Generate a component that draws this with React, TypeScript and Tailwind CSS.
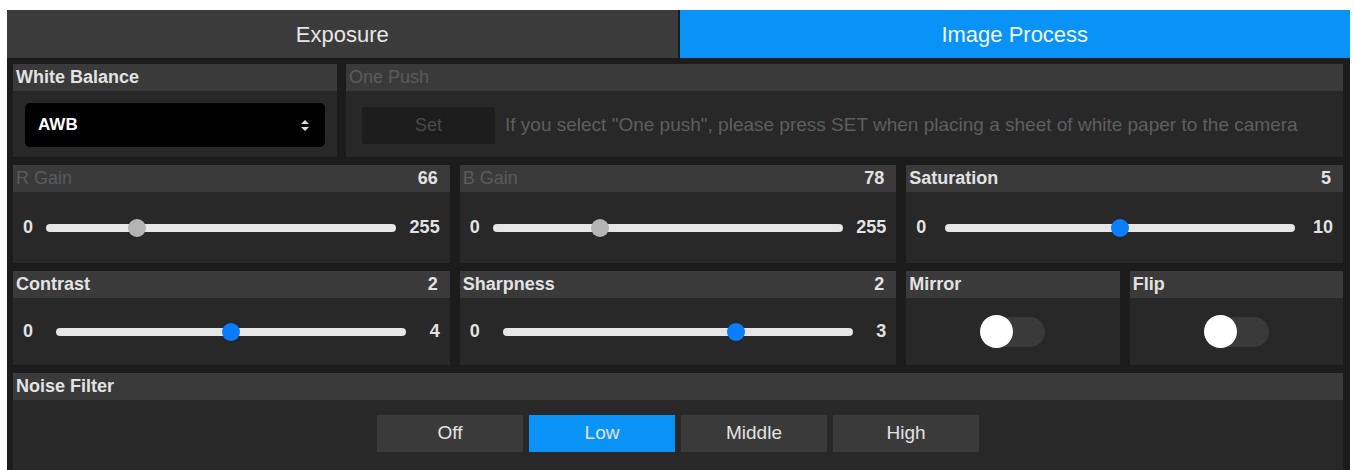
import React from 'react';

interface CardProps {
  title: string;
  value?: number;
  dim?: boolean;
  className?: string;
  children?: React.ReactNode;
}

function Card({ title, value, dim, className = '', children }: CardProps) {
  return (
    <div className={`flex flex-col bg-[#282828] ${className}`}>
      <div className="flex h-[27px] shrink-0 items-center justify-between bg-[#3a3a3a] pl-[3px] pr-[12px] text-[18px]">
        <span className={dim ? 'text-[#5a5a5a]' : 'font-bold text-[#e2e2e2]'}>{title}</span>
        {value !== undefined && <span className="font-bold text-[#e2e2e2]">{value}</span>}
      </div>
      <div className="flex-1">{children}</div>
    </div>
  );
}

interface SliderProps {
  min: number;
  max: number;
  value: number;
  disabled?: boolean;
}

function Slider({ min, max, value, disabled }: SliderProps) {
  const pct = ((value - min) / (max - min)) * 100;
  return (
    <div className="flex h-full items-center justify-between px-[10px] text-[18px] font-bold text-[#e2e2e2]">
      <span>{min}</span>
      <div className="relative h-[8px] w-[350px] rounded-full bg-[#e6e6e6]">
        <span
          className={`absolute top-1/2 h-[18px] w-[18px] -translate-x-1/2 -translate-y-1/2 rounded-full ${
            disabled ? 'bg-[#b4b4b4]' : 'bg-[#0a7cff]'
          }`}
          style={{ left: `${pct}%` }}
        />
      </div>
      <span>{max}</span>
    </div>
  );
}

function Toggle() {
  return (
    <div className="flex h-full items-center justify-center">
      <div className="flex h-[30px] w-[65px] items-center rounded-full bg-[#3a3a3a]">
        <span className="h-[33px] w-[33px] shrink-0 rounded-full bg-white" />
      </div>
    </div>
  );
}

function UpDownIcon() {
  return (
    <svg width="8" height="11" viewBox="0 0 8 11" fill="#dcdcdc">
      <path d="M4 0 L8 4 H0 Z" />
      <path d="M0 7 H8 L4 11 Z" />
    </svg>
  );
}

export default function App() {
  const filters = ['Off', 'Low', 'Middle', 'High'];

  return (
    <div className="h-[470px] overflow-hidden bg-white pl-[7px] pr-[3px] pt-[10px] font-[Liberation_Sans,Arial,sans-serif]">
      <div className="flex h-full flex-col bg-[#1c1c1c]">
        {/* tabs */}
        <div className="grid h-[48px] shrink-0 grid-cols-2 gap-[2px] text-[22px]">
          <div className="flex items-center justify-center bg-[#3b3b3b] text-[#e6e6e6]">Exposure</div>
          <div className="flex items-center justify-center bg-[#0a93f7] text-[#eef7ff]">Image Process</div>
        </div>

        <div className="flex flex-1 flex-col gap-2 pl-[6px] pr-[7px] pt-[6px]">
          {/* white balance + one push */}
          <div className="flex h-[93px] shrink-0 gap-[9px]">
            <Card title="White Balance" className="w-[324px] shrink-0">
              <div className="px-3 pt-[12px]">
                <div className="flex h-[44px] items-center justify-between rounded-[5px] bg-black pl-[13px] pr-[16px]">
                  <span className="text-[17px] font-bold text-white">AWB</span>
                  <UpDownIcon />
                </div>
              </div>
            </Card>
            <Card title="One Push" dim className="flex-1">
              <div className="flex items-center pl-[16px] pt-[16px]">
                <div className="flex h-[37px] w-[133px] shrink-0 items-center justify-center rounded-[2px] bg-[#1d1d1d] text-[18px] text-[#4a4a4a]">
                  Set
                </div>
                <span className="ml-[10px] whitespace-nowrap text-[19px] text-[#5e5e5e]">
                  If you select "One push", please press SET when placing a sheet of white paper to the camera
                </span>
              </div>
            </Card>
          </div>

          {/* gains + saturation */}
          <div className="grid h-[98px] shrink-0 grid-cols-3 gap-[10px]">
            <Card title="R Gain" value={66} dim>
              <Slider min={0} max={255} value={66} disabled />
            </Card>
            <Card title="B Gain" value={78} dim>
              <Slider min={0} max={255} value={78} disabled />
            </Card>
            <Card title="Saturation" value={5}>
              <Slider min={0} max={10} value={5} />
            </Card>
          </div>

          {/* contrast, sharpness, mirror, flip */}
          <div className="grid h-[94px] shrink-0 grid-cols-6 gap-[10px]">
            <Card title="Contrast" value={2} className="col-span-2">
              <Slider min={0} max={4} value={2} />
            </Card>
            <Card title="Sharpness" value={2} className="col-span-2">
              <Slider min={0} max={3} value={2} />
            </Card>
            <Card title="Mirror">
              <Toggle />
            </Card>
            <Card title="Flip">
              <Toggle />
            </Card>
          </div>

          {/* noise filter */}
          <Card title="Noise Filter" className="flex-1">
            <div className="flex justify-center gap-[6px] pt-[15px]">
              {filters.map((f) => (
                <div
                  key={f}
                  className={`flex h-[37px] w-[146px] items-center justify-center text-[19px] text-[#e2e2e2] ${
                    f === 'Low' ? 'bg-[#0a93f7]' : 'bg-[#3a3a3a]'
                  }`}
                >
                  {f}
                </div>
              ))}
            </div>
          </Card>
        </div>
      </div>
    </div>
  );
}
